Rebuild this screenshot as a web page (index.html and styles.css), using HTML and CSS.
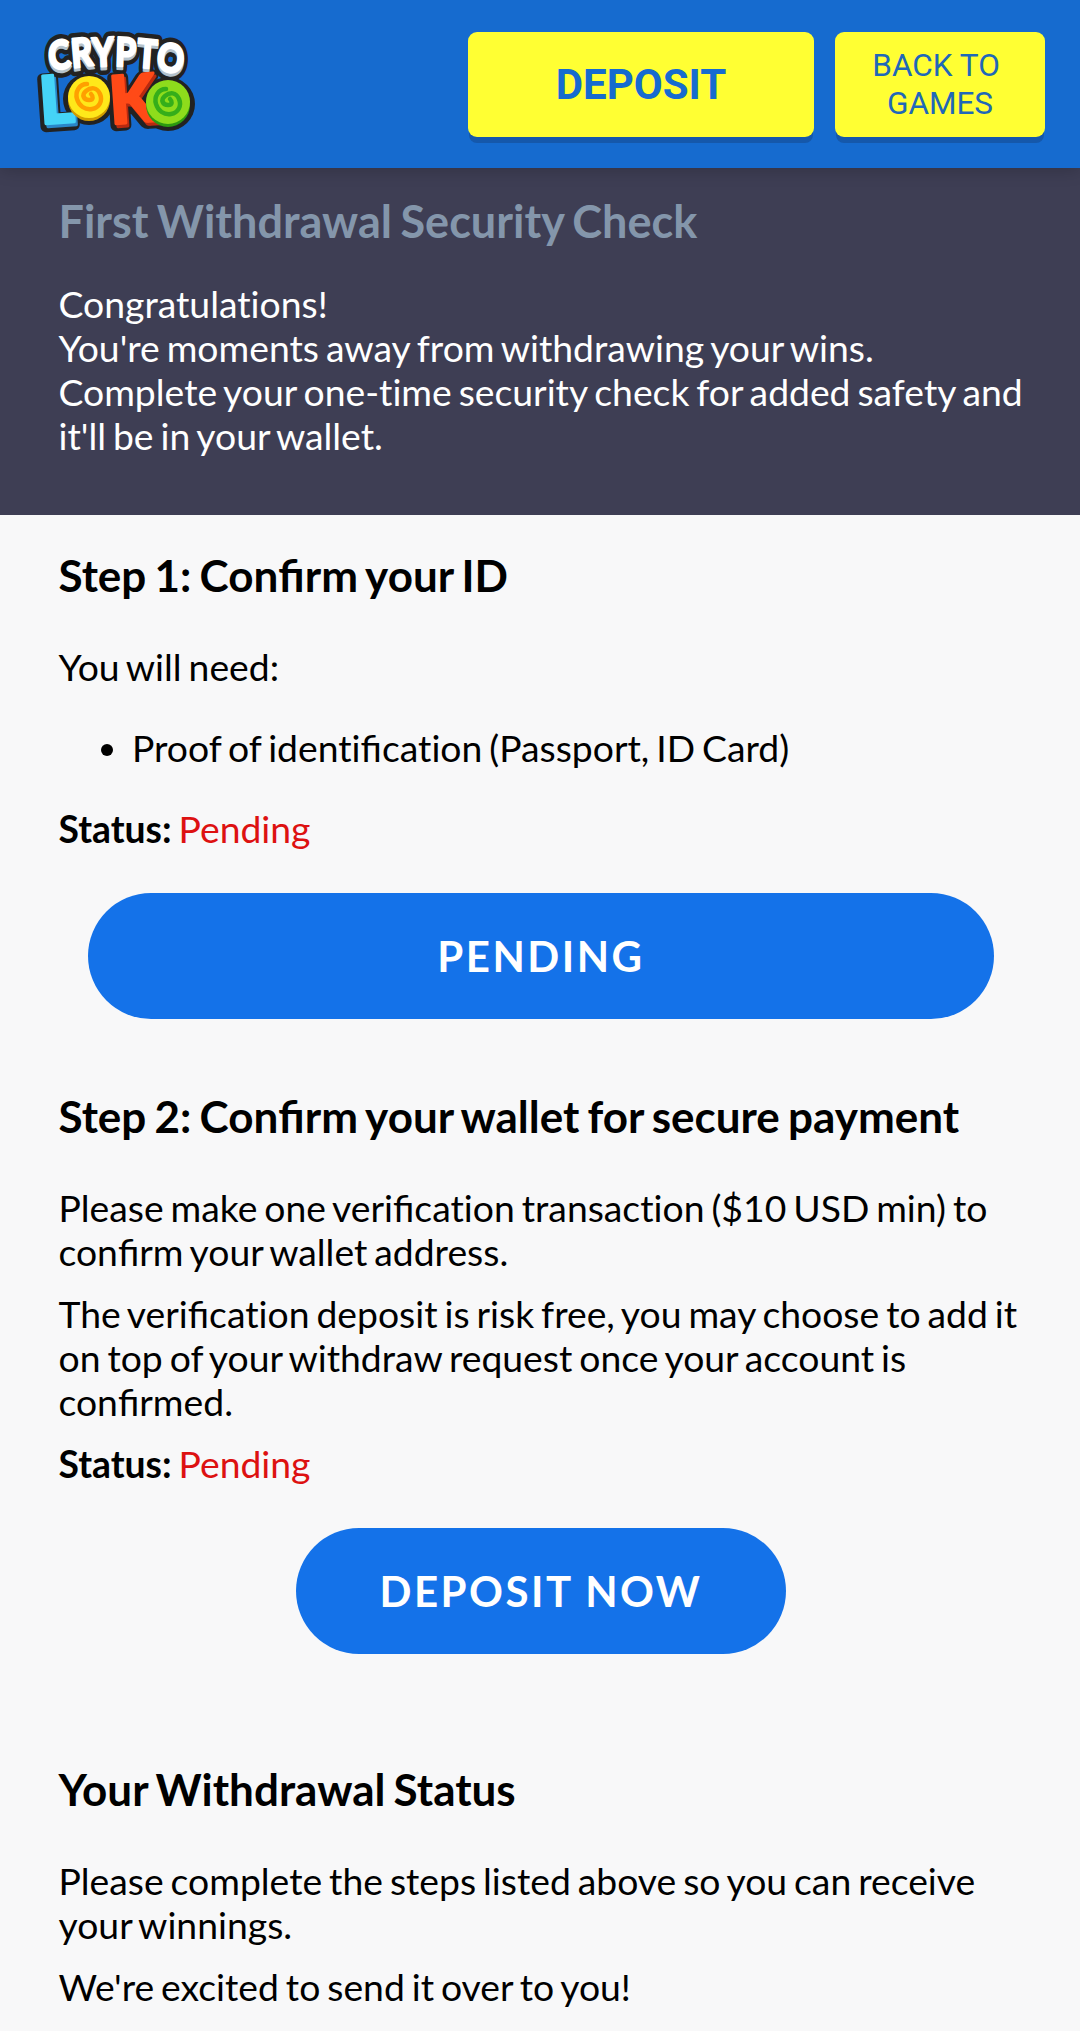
FILE: index.html
```html
<!DOCTYPE html>
<html lang="en">
<head>
<meta charset="utf-8">
<title>First Withdrawal Security Check</title>
<link rel="stylesheet" href="styles.css">
</head>
<body>
<header class="topbar">
  <a class="logo" href="#" aria-label="Crypto Loko">
    <svg viewBox="0 0 170 104" width="170" height="104">
      <defs>
        <text id="word-top" class="logo-top" transform="translate(20 0) scale(0.84 1)" y="39" rotate="-8 -6 -3 2 5 8" dy="0 -3 -1 -1 1 3">CRYPTO</text>
        <path id="swirl" d="M-2-13C-10-13-14-5-12 2S-4 13 3 12 14 4 11-3 2-10-3-6-5 3 0 3 4-1 2-3"/>
      </defs>
      <!-- dark outline shared by the whole wordmark -->
      <g class="logo-outline">
        <use href="#word-top"/>
        <use href="#word-top" y="3"/>
        <text x="11" y="95" rotate="-4" class="logo-big">L</text>
        <text x="81" y="94" rotate="-4" class="logo-big">K</text>
        <circle cx="59" cy="67" r="26"/>
        <circle cx="138" cy="72" r="27"/>
      </g>
      <use href="#word-top" y="3" class="logo-shade"/>
      <use href="#word-top" class="logo-white"/>
      <text x="13" y="95" rotate="-4" class="logo-big logo-blue-shade">L</text>
      <text x="11" y="92" rotate="-4" class="logo-big logo-blue">L</text>
      <text x="83" y="95" rotate="-4" class="logo-big logo-red-shade">K</text>
      <text x="81" y="92" rotate="-4" class="logo-big logo-red">K</text>
      <circle cx="59" cy="68" r="21" fill="#d29b00"/>
      <circle cx="59" cy="65" r="21" fill="#ffe81a"/>
      <use href="#swirl" x="59" y="65" class="swirl-orange"/>
      <circle cx="138" cy="73" r="22" fill="#2c9a10"/>
      <circle cx="138" cy="70" r="22" fill="#8edc1c"/>
      <use href="#swirl" x="138" y="70" class="swirl-green"/>
    </svg>
  </a>
  <nav class="topbar-actions">
    <a class="btn-yellow btn-deposit" href="#">DEPOSIT</a>
    <a class="btn-yellow btn-back" href="#">BACK TO&nbsp;<br>GAMES</a>
  </nav>
</header>

<section class="intro">
  <h1>First Withdrawal Security Check</h1>
  <p>Congratulations!<br>You're moments away from withdrawing your wins.<br>Complete your one-time security check for added safety and it'll be in your wallet.</p>
</section>

<main class="steps">
  <h2>Step 1: Con<span class="lig">fi</span>rm your ID</h2>
  <p class="need">You will need:</p>
  <ul>
    <li>Proof of identi<span class="lig">fi</span>cation (Passport, ID Card)</li>
  </ul>
  <p class="status"><strong>Status:</strong> <span class="pending">Pending</span></p>
  <a class="pill pill-wide" href="#">PENDING</a>

  <h2 class="step-two">Step 2: Con<span class="lig">fi</span>rm your wallet for secure payment</h2>
  <p class="need">Please make one veri<span class="lig">fi</span>cation transaction ($10 USD min) to con<span class="lig">fi</span>rm your wallet address.</p>
  <p class="tight">The veri<span class="lig">fi</span>cation deposit is risk free, you may choose to add it on top of your withdraw request once your account is con<span class="lig">fi</span>rmed.</p>
  <p class="tight"><strong>Status:</strong> <span class="pending">Pending</span></p>
  <a class="pill pill-short" href="#">DEPOSIT NOW</a>

  <h2 class="step-three">Your Withdrawal Status</h2>
  <p class="need">Please complete the steps listed above so you can receive your winnings.</p>
  <p class="tight">We're excited to send it over to you!</p>
</main>
</body>
</html>
```

FILE: styles.css
```css
* { box-sizing: border-box; }

html, body { margin: 0; padding: 0; }

body {
  background: #f8f8f9;
  color: #000;
  font-family: Lato, "Liberation Sans", sans-serif;
  font-size: 37.3px;
  line-height: 44px;
  word-spacing: -2.6px;
  font-variant-ligatures: none;
}

.lig { font-variant-ligatures: normal; }

a { text-decoration: none; }

.topbar {
  display: flex;
  align-items: flex-start;
  justify-content: space-between;
  height: 168px;
  padding: 32px 35px 0 30px;
  background: #166bcf;
  box-shadow: 0 2px 16px rgba(0, 0, 0, 0.2);
  position: relative;
  z-index: 1;
}

.logo { display: block; width: 170px; height: 104px; }
.logo svg { display: block; overflow: visible; }

.logo-top { font: 900 40px Lato, sans-serif; stroke: currentColor; stroke-width: var(--outline, 2px); stroke-linejoin: round; }
.logo-big { font: 900 66px Lato, sans-serif; stroke: currentColor; stroke-width: var(--outline, 3px); stroke-linejoin: round; }
.logo-outline { --outline: 11px; color: #222; fill: #222; }
.logo-white { color: #fff; fill: #fff; }
.logo-shade { color: #b4c2cc; fill: #b4c2cc; }
.logo-blue { color: #45d4f7; fill: #45d4f7; }
.logo-blue-shade { color: #2a86c8; fill: #2a86c8; }
.logo-red { color: #ff4a17; fill: #ff4a17; }
.logo-red-shade { color: #b82a10; fill: #b82a10; }

.swirl-orange, .swirl-green { fill: none; stroke-width: 4.5px; stroke-linecap: round; }
.swirl-orange { stroke: #ffa000; }
.swirl-green { stroke: #35ae1a; }

.topbar-actions { display: flex; gap: 21px; }

.btn-yellow {
  display: flex;
  align-items: center;
  justify-content: center;
  height: 105px;
  background: #ffff33;
  border-radius: 9px;
  box-shadow: 0 7px 0 -1px #1558ab;
  color: #166bcf;
  font-family: Roboto, sans-serif;
  text-align: center;
  word-spacing: normal;
}

.btn-deposit { width: 346px; font-size: 42px; font-weight: 700; }
.btn-back { width: 210px; font-size: 31.5px; line-height: 38px; color: #1f68b8; }

.intro {
  height: 347px;
  padding: 22px 40px 0 58.5px;
  background: #3e3e54;
  color: #fff;
}

.intro h1 {
  margin: 0 0 30px;
  color: #8496ab;
  font-size: 45px;
  line-height: 62px;
  font-weight: 700;
  word-spacing: -2.4px;
}

.intro p { margin: 0; }

.steps { padding: 0 40px 0 58.5px; }

h2 {
  margin: 0;
  font-size: 44px;
  line-height: 48px;
  font-weight: 700;
  word-spacing: -2.5px;
}

.steps > h2:first-child { padding-top: 36px; }

p { margin: 0; }

.need { margin-top: 46px; }
.tight { margin-top: 18px; }

ul { margin: 37px 0 0; padding: 0 0 0 73.5px; }

.status { margin-top: 37px; }

strong { font-weight: 700; }
.pending { color: #dd1111; }

.pill {
  display: block;
  height: 126px;
  border-radius: 63px;
  background: #1472e9;
  color: #fff;
  font-size: 42px;
  font-weight: 700;
  line-height: 126px;
  letter-spacing: 2.5px;
  word-spacing: normal;
  text-align: center;
}

.pill-wide { width: 906px; margin-top: 42px; margin-left: 29.5px; }
.pill-short { width: 490px; margin-top: 42px; margin-left: 237.5px; }

.step-two { margin-top: 73px; }
.step-three { margin-top: 111px; }
```
